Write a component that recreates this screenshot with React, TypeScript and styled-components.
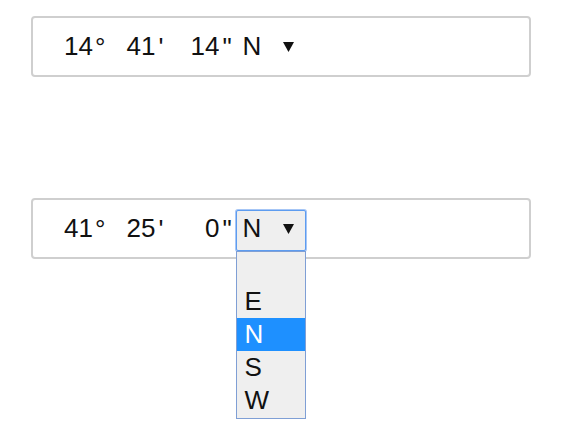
import React, { useState } from "react";
import styled, { createGlobalStyle } from "styled-components";

const GlobalStyle = createGlobalStyle`
  html, body { margin: 0; padding: 0; background: #fff; }
  body { font-family: "Liberation Sans", Arial, sans-serif; }
`;

const Page = styled.div`
  box-sizing: border-box;
  min-height: 444px;
  padding: 16px 0 0 31px;
  display: flex;
  flex-direction: column;
  gap: 121px;
`;

const Field = styled.div`
  position: relative;
  box-sizing: border-box;
  width: 500px;
  height: 61px;
  border: 2px solid #cfcfcf;
  border-radius: 4px;
  display: flex;
  align-items: center;
  padding-left: 30px;
  font-size: 26px;
  color: #111;
`;

const NumInput = styled.input<{ $w: number; $ml: number }>`
  box-sizing: border-box;
  width: ${(p) => p.$w}px;
  margin-left: ${(p) => p.$ml}px;
  padding: 0;
  border: none;
  outline: none;
  background: transparent;
  font: inherit;
  color: inherit;
  text-align: right;
`;

const Unit = styled.span<{ $ml: number }>`
  margin-left: ${(p) => p.$ml}px;
  line-height: 1;
`;

const Select = styled.div<{ $open: boolean }>`
  position: relative;
  box-sizing: border-box;
  width: 70px;
  height: 41px;
  margin-left: 4px;
  margin-top: 4px;
  padding-left: 6px;
  padding-bottom: 4px;
  display: flex;
  align-items: center;
  border: 1px solid ${(p) => (p.$open ? "#5d9cf0" : "transparent")};
  border-radius: 2px;
  box-shadow: ${(p) => (p.$open ? "0 0 0 1px #a6c6f6" : "none")};
  background: ${(p) => (p.$open ? "#efefef" : "transparent")};
  cursor: default;
`;

const Value = styled.span`
  width: 40px;
`;

const Arrow = styled.svg`
  display: block;
  margin-top: 1px;
`;

const List = styled.div`
  position: absolute;
  z-index: 2;
  top: 100%;
  left: -1px;
  box-sizing: border-box;
  width: 70px;
  margin-top: 1px;
  border: 1px solid #7f9fd5;
  background: #efefef;
  padding-bottom: 1px;
`;

const Option = styled.div<{ $active: boolean }>`
  height: 33px;
  box-sizing: border-box;
  padding-left: 8px;
  display: flex;
  align-items: center;
  font-size: 26px;
  color: ${(p) => (p.$active ? "#fff" : "#111")};
  background: ${(p) => (p.$active ? "#1e90ff" : "transparent")};
`;

type Coord = { d: string; m: string; s: string; dir: string; open: boolean };

const OPTIONS = ["", "E", "N", "S", "W"];

function CoordField({ d, m, s, dir, open }: Coord) {
  const [deg, setDeg] = useState(d);
  const [min, setMin] = useState(m);
  const [sec, setSec] = useState(s);
  return (
    <Field>
      <NumInput $w={29} $ml={1} value={deg} onChange={(e) => setDeg(e.target.value)} />
      <Unit $ml={2}>°</Unit>
      <NumInput $w={29} $ml={21} value={min} onChange={(e) => setMin(e.target.value)} />
      <Unit $ml={3}>'</Unit>
      <NumInput $w={41} $ml={15} value={sec} onChange={(e) => setSec(e.target.value)} />
      <Unit $ml={3}>"</Unit>
      <Select $open={open}>
        <Value>{dir}</Value>
        <Arrow width="11" height="10" viewBox="0 0 11 10">
          <polygon points="0,0 11,0 5.5,10" fill="#111" />
        </Arrow>
        {open && (
          <List>
            {OPTIONS.map((o, i) => (
              <Option key={i} $active={o === dir}>
                {o}
              </Option>
            ))}
          </List>
        )}
      </Select>
    </Field>
  );
}

export default function App() {
  return (
    <>
      <GlobalStyle />
      <Page>
        <CoordField d="14" m="41" s="14" dir="N" open={false} />
        <CoordField d="41" m="25" s="0" dir="N" open={true} />
      </Page>
    </>
  );
}
